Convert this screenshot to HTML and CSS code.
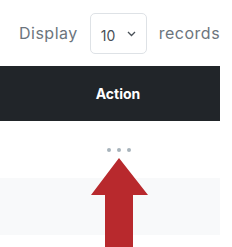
FILE: index.html
```html
<!DOCTYPE html>
<html>
<head>
<meta charset="utf-8">
<link rel="stylesheet" href="styles.css">
</head>
<body>
<div class="page">
  <div class="length">
    <span class="label">Display</span>
    <div class="select"><span class="val">10</span>
      <svg class="chev" width="9" height="6" viewBox="0 0 9 6"><path d="M1 1 L4.5 4.5 L8 1" fill="none" stroke="#495057" stroke-width="1.3"/></svg>
    </div>
    <span class="label">records</span>
  </div>
  <div class="table">
    <div class="thead"><span class="th">Action</span></div>
    <div class="row"><div class="dots"><i></i><i></i><i></i></div></div>
    <div class="row striped"></div>
  </div>
  <svg class="arrow" width="58" height="90" viewBox="0 0 58 90"><polygon points="28,0 57,37 42,37 42,90 14,90 14,37 0,37" fill="#b8292d"/></svg>
</div>
</body>
</html>
```
FILE: styles.css
```css
html, body { margin: 0; padding: 0; background: #fff; }
body { font-family: Inter, "Open Sans", sans-serif; overflow: hidden; }
.page { position: relative; width: 232px; height: 247px; }
.length { height: 66px; display: flex; align-items: center; padding-left: 19px; gap: 12px; box-sizing: border-box; }
.label { font-size: 16px; letter-spacing: 0.5px; color: #6c757d; }
.select { width: 57px; height: 41px; box-sizing: border-box; border: 1px solid #dee2e6; border-radius: 5px; display: flex; align-items: center; padding-left: 10px; gap: 12px; margin-top: 1px; }
.val { font-size: 14px; color: #495057; padding-top: 3px; }
.table { width: 220px; }
.thead { height: 55px; background: #212529; display: flex; align-items: center; justify-content: center; padding-left: 16px; box-sizing: border-box; }
.th { color: #fff; font-weight: 700; font-size: 14px; }
.row { height: 57px; display: flex; justify-content: center; padding-left: 18px; box-sizing: border-box; }
.striped { background: #f8f9fa; }
.dots { display: flex; gap: 6px; margin-top: 27px; }
.dots i { width: 4px; height: 4px; border-radius: 50%; background: #a8b4bc; display: block; }
.arrow { position: absolute; left: 91px; top: 158px; }
```
